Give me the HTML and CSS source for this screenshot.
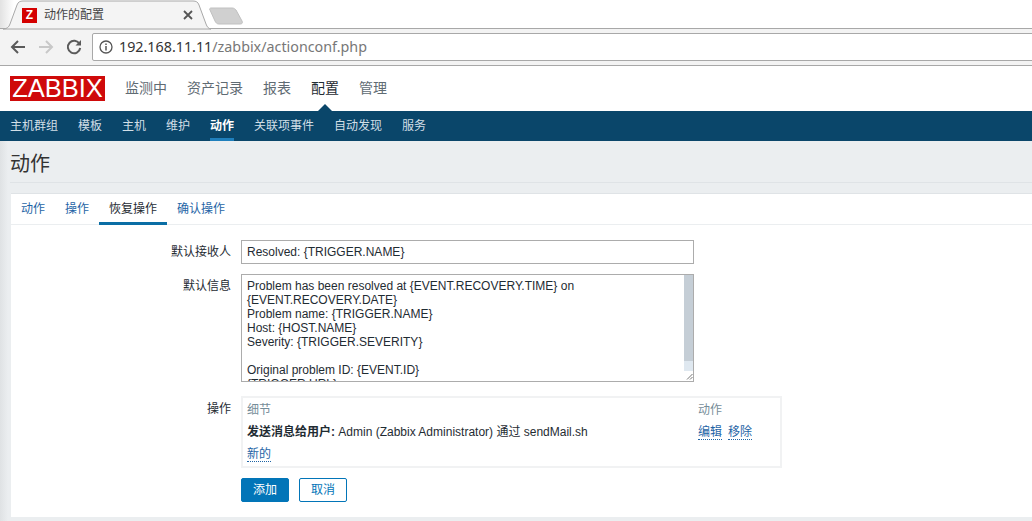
FILE: index.html
```html
<!DOCTYPE html>
<html lang="zh">
<head>
<meta charset="utf-8">
<title>动作的配置</title>
<link rel="stylesheet" href="styles.css">
</head>
<body>
<div class="tabstrip">
  <div class="tab">
    <svg class="tab-shape" width="208" height="30" viewBox="0 0 208 30"><path d="M0 29 C4 29 6 27 7 24 L14 5 C15 2 17 1 20 1 L190 1 C193 1 195 2 196 5 L203 24 C204 27 206 29 208 29 Z" fill="#f4f4f4" stroke="#a8a8a8"/></svg>
    <span class="favicon">Z</span>
    <span class="tab-title">动作的配置</span>
    <svg class="tab-close" width="10" height="10" viewBox="0 0 10 10"><path d="M1 1 L9 9 M9 1 L1 9" stroke="#555" stroke-width="1.8"/></svg>
  </div>
  <svg class="newtab" width="36" height="18" viewBox="0 0 36 18"><path d="M2 1 L23 1 C25 1 26 2 27 3 L33 14 C34 16 33 17 31 17 L10 17 C8 17 7 16 6 14 L1 3 C0 2 1 1 2 1 Z" fill="#d0d0d0" stroke="#c0c0c0"/></svg>
</div>
<div class="toolbar">
  <svg class="tool" width="18" height="18" viewBox="0 0 18 18"><path d="M16 9 H3 M9 3 L3 9 L9 15" fill="none" stroke="#5a5a5a" stroke-width="2"/></svg>
  <svg class="tool" width="18" height="18" viewBox="0 0 18 18"><path d="M2 9 H15 M9 3 L15 9 L9 15" fill="none" stroke="#c8c8c8" stroke-width="2"/></svg>
  <svg class="tool" width="18" height="18" viewBox="0 0 18 18"><path d="M14.5 6 A6.2 6.2 0 1 0 15.2 10" fill="none" stroke="#5a5a5a" stroke-width="2"/><path d="M10.5 7.5 H16 V2 Z" fill="#5a5a5a"/></svg>
  <div class="address">
    <svg class="info" width="14" height="14" viewBox="0 0 14 14"><circle cx="7" cy="7" r="6" fill="none" stroke="#555" stroke-width="1.3"/><path d="M7 6 V10.5 M7 3.4 V5" stroke="#555" stroke-width="1.5"/></svg>
    <span class="host">192.168.11.11</span><span class="path">/zabbix/actionconf.php</span>
  </div>
</div>
<header class="topbar">
  <div class="logo">ZABBIX</div>
  <nav class="mainnav">
    <a>监测中</a><a>资产记录</a><a>报表</a><a class="current">配置</a><a>管理</a>
  </nav>
</header>
<nav class="subnav">
  <a>主机群组</a><a>模板</a><a>主机</a><a>维护</a><a class="current">动作</a><a>关联项事件</a><a>自动发现</a><a>服务</a>
</nav>
<main class="content">
  <div class="pagehead"><h1>动作</h1></div>
  <section class="card">
    <div class="cardtabs">
      <a>动作</a><a>操作</a><a class="current">恢复操作</a><a>确认操作</a>
    </div>
    <form class="form">
      <label class="lbl lbl-input">默认接收人</label>
      <div class="input">Resolved: {TRIGGER.NAME}</div>
      <label class="lbl lbl-area">默认信息</label>
      <div class="textarea">
        <div class="textarea-text">Problem has been resolved at {EVENT.RECOVERY.TIME} on<br>{EVENT.RECOVERY.DATE}<br>Problem name: {TRIGGER.NAME}<br>Host: {HOST.NAME}<br>Severity: {TRIGGER.SEVERITY}<br><br>Original problem ID: {EVENT.ID}<br>{TRIGGER.URL}</div>
        <div class="scrollbar"><div class="thumb"></div><div class="track"></div><div class="grip"><svg width="10" height="10" viewBox="0 0 10 10"><path d="M3 8.5 L8.5 3 M6 8.5 L8.5 6" stroke="#777" stroke-width="1"/></svg></div></div>
      </div>
      <label class="lbl lbl-ops">操作</label>
      <div class="ops">
        <div class="ops-head">细节</div><div class="ops-head">动作</div>
        <div class="ops-cell"><b>发送消息给用户:</b> Admin (Zabbix Administrator) 通过 sendMail.sh</div>
        <div class="ops-cell ops-links"><a class="link">编辑</a><a class="link">移除</a></div>
        <div class="ops-cell"><a class="link">新的</a></div><div></div>
      </div>
      <div class="buttons">
        <button type="button" class="btn btn-primary">添加</button>
        <button type="button" class="btn">取消</button>
      </div>
    </form>
  </section>
</main>
</body>
</html>
```
FILE: styles.css
```css
* { box-sizing: border-box; }
html, body { margin: 0; padding: 0; height: 100%; overflow: hidden; }
body { width: 1032px; height: 521px; background: #fff; color: #1f2c33; font: 12px/14px "Liberation Sans", "Noto Sans CJK SC", sans-serif; }

.tabstrip { height: 29px; display: flex; align-items: flex-start; background: linear-gradient(90deg, #e2e2e2 0, #fff 14px); border-bottom: 1px solid #a8a8a8; }
.tab { position: relative; width: 208px; height: 29px; margin-left: 3px; display: flex; align-items: center; flex: none; }
.tab-shape { position: absolute; left: 0; top: 0; }
.favicon { position: relative; width: 15px; height: 15px; margin-left: 19px; margin-top: 1px; background: #d40000; color: #fff; font: bold 12px/15px "Liberation Sans", sans-serif; text-align: center; }
.tab-title { position: relative; margin-left: 7px; margin-top: 1px; font-size: 12px; color: #444; }
.tab-close { position: relative; margin-left: 79px; margin-top: 1px; }
.newtab { margin-top: 7px; margin-left: -2px; flex: none; }

.toolbar { height: 37px; display: flex; align-items: flex-start; gap: 10px; padding: 4px 0 0 9px; background: #f3f3f3; border-bottom: 1px solid #a8a8a8; }
.tool { flex: none; margin-top: 5px; }
.address { flex: 1; height: 28px; margin-left: -1px; margin-right: -10px; display: flex; align-items: center; background: #fff; border: 1px solid #a8a8a8; border-radius: 2px; font: 14.3px/26px "Noto Sans", sans-serif; }
.info { margin: 0 6px 0 6px; flex: none; }
.host { color: #333; }
.path { color: #777; }

.topbar { height: 45px; display: flex; align-items: flex-start; background: #fff; padding: 10px 0 0 10px; }
.logo { width: 95px; height: 25px; background: #cf0a0a; color: #fff; font: 25.5px/25px "Liberation Sans", sans-serif; text-align: center; }
.mainnav { display: flex; gap: 20px; margin-left: 20px; font-size: 14px; line-height: 24px; color: #5f6b73; }
.mainnav a.current { position: relative; color: #1f2c33; }
.mainnav a.current::after { content: ""; position: absolute; left: 7px; top: 28px; border: 7px solid transparent; border-top: 0; border-bottom-color: #0a466a; }

.subnav { height: 30px; display: flex; gap: 20px; padding-left: 10px; background: #0a466a; color: #d2dfe7; line-height: 30px; }
.subnav a { height: 30px; }
.subnav a.current { color: #fff; font-weight: bold; border-bottom: 3px solid #1f7fbc; }

.content { height: 380px; background: linear-gradient(90deg, #dfe2e4 0, #ebeef0 8px); padding-bottom: 4px; display: flex; flex-direction: column; }
.pagehead { height: 42px; margin-left: 10px; border-bottom: 1px solid #dfe3e6; flex: none; }
.pagehead h1 { margin: 0; font-size: 20px; font-weight: normal; line-height: 46px; color: #333; }
.card { flex: 1; margin: 10px 0 0 11px; background: #fff; border-top: 1px solid #dfe3e6; }
.cardtabs { height: 31px; display: flex; border-bottom: 1px solid #ebeef0; color: #1f65a6; line-height: 31px; }
.cardtabs a { padding: 0 10px; height: 31px; }
.cardtabs a.current { color: #1f2c33; border-bottom: 3px solid #0a6ea5; }

.form { display: grid; grid-template-columns: 220px 1fr; column-gap: 10px; row-gap: 10px; padding-top: 15px; justify-items: start; }
.lbl { justify-self: end; color: #1f2c33; }
.lbl-input { padding-top: 5px; }
.lbl-area { padding-top: 5px; }
.lbl-ops { padding-top: 10px; }
.input { width: 453px; height: 24px; padding: 0 5px; border: 1px solid #acacac; line-height: 22px; }
.textarea { width: 453px; height: 108px; display: flex; border: 1px solid #acacac; overflow: hidden; }
.textarea-text { flex: 1; padding: 4px 5px; white-space: nowrap; overflow: hidden; }
.scrollbar { width: 9px; flex: none; display: flex; flex-direction: column; }
.thumb { height: 86px; background: #c5ced6; }
.track { flex: 1; background: #dfe8f0; }
.grip { height: 10px; background: #fff; line-height: 0; }
.ops { width: 541px; height: 72px; margin-top: 4px; border: 2px solid #f1f2f3; padding: 1px 4px; display: grid; grid-template-columns: 451px 1fr; grid-auto-rows: 22px; align-items: center; }
.ops-head { color: #768d99; }
.ops-links { display: flex; gap: 6px; }
.link { color: #1f65a6; border-bottom: 1px dotted #1f65a6; }
.buttons { grid-column: 2; display: flex; gap: 10px; }
.btn { width: 48px; height: 24px; padding: 0; border: 1px solid #0275b8; border-radius: 2px; background: #fff; color: #0275b8; font: inherit; line-height: 22px; }
.btn-primary { background: #0275b8; color: #fff; }
```
